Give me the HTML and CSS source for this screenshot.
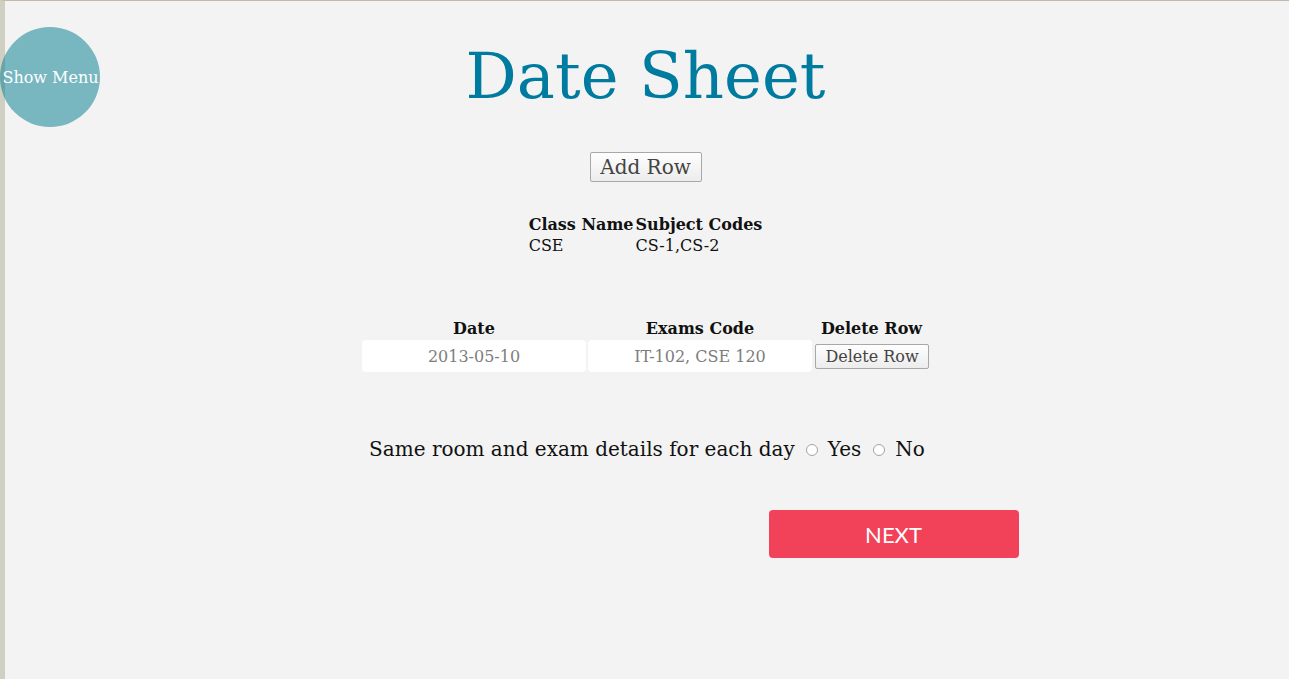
FILE: index.html
```html
<!DOCTYPE html>
<html>
<head>
<meta charset="utf-8">
<link rel="stylesheet" href="styles.css">
</head>
<body>
<div class="menu-btn">Show Menu</div>
<main class="page">
  <h1 class="title">Date Sheet</h1>
  <div class="add-wrap"><button class="btn btn-add">Add Row</button></div>
  <table class="info">
    <tr><th>Class Name</th><th>Subject Codes</th></tr>
    <tr><td>CSE</td><td>CS-1,CS-2</td></tr>
  </table>
  <table class="rows">
    <tr><th>Date</th><th>Exams Code</th><th>Delete Row</th></tr>
    <tr>
      <td><input class="field" type="text" placeholder="2013-05-10"></td>
      <td><input class="field" type="text" placeholder="IT-102, CSE 120"></td>
      <td><button class="btn btn-del">Delete Row</button></td>
    </tr>
  </table>
  <div class="same">
    <span>Same room and exam details for each day</span>
    <input class="radio" type="radio" name="same"><span>Yes</span>
    <input class="radio" type="radio" name="same"><span>No</span>
  </div>
  <div class="next-wrap"><button class="next">NEXT</button></div>
</main>
</body>
</html>
```
FILE: styles.css
```css
html, body {
  margin: 0;
  padding: 0;
  height: 100%;
}
body {
  background: #f3f3f3;
  border-left: 5px solid #cfcfc2;
  border-top: 1px solid #c4b8a8;
  box-sizing: border-box;
  font-family: "DejaVu Serif", serif;
  color: #111;
}
.menu-btn {
  position: absolute;
  left: 0;
  top: 27px;
  width: 100px;
  height: 100px;
  border-radius: 50%;
  background: rgba(19, 132, 150, 0.55);
  color: #fff;
  font-size: 16px;
  display: flex;
  align-items: center;
  justify-content: center;
  white-space: nowrap;
  padding-left: 1px;
  box-sizing: border-box;
}
.page {
  display: flex;
  flex-direction: column;
  align-items: center;
  padding-right: 3px;
}
.title {
  margin: 30px 0 0;
  font-size: 64px;
  font-weight: normal;
  color: #007ba0;
  line-height: 90px;
}
.add-wrap {
  margin-top: 31px;
}
.btn {
  font-family: "DejaVu Serif", serif;
  color: #444;
  background: linear-gradient(#fefefe, #ececec);
  border: 1px solid #aaa8a4;
  border-radius: 2px;
  padding: 0;
}
.btn-add {
  font-size: 20px;
  width: 112px;
  height: 30px;
  line-height: 26px;
}
.info {
  margin-top: 31px;
  font-size: 16px;
  line-height: 19px;
  text-align: left;
  border-spacing: 2px;
}
.info th, .info td {
  padding: 0;
  text-align: left;
}
.rows {
  margin-top: 59px;
  border-spacing: 2px;
  font-size: 16px;
}
.rows th {
  padding: 1px 1px 0;
  text-align: center;
}
.rows td {
  padding: 0;
  vertical-align: middle;
}
.field {
  display: block;
  width: 224px;
  height: 32px;
  box-sizing: border-box;
  border: none;
  border-radius: 4px;
  background: #fff;
  font-family: "DejaVu Serif", serif;
  font-size: 16px;
  text-align: center;
  outline: none;
}
.field::placeholder {
  color: #7d7d7d;
}
.btn-del {
  font-size: 16px;
  width: 114px;
  height: 25px;
  line-height: 21px;
  margin-left: 1px;
}
.same {
  margin-top: 63px;
  margin-left: 3px;
  font-size: 20px;
  display: flex;
  align-items: center;
}
.radio {
  -webkit-appearance: none;
  appearance: none;
  width: 12px;
  height: 12px;
  border: 1px solid #a9a299;
  border-radius: 50%;
  background: #fff;
  margin: 2px 10px 0 11px;
  box-sizing: border-box;
}
.radio + span + .radio {
  margin-left: 12px;
}
.next-wrap {
  align-self: stretch;
  margin-top: 49px;
}
.next {
  margin-left: calc(50% + 123px);
  width: 250px;
  height: 48px;
  border: none;
  border-radius: 4px;
  background: #f2425a;
  color: #fff;
  font-family: Lato, "Open Sans", sans-serif;
  font-size: 22px;
  padding: 0;
}
```
